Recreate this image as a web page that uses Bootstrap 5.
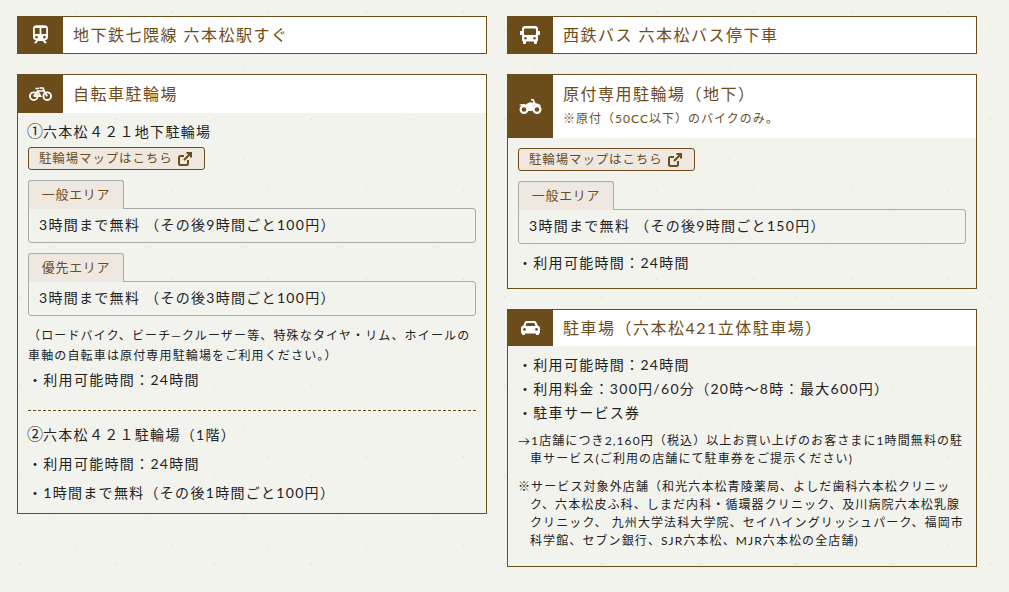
<!DOCTYPE html>
<html lang="ja">
<head>
<meta charset="utf-8">
<title>アクセス</title>
<link href="https://cdn.jsdelivr.net/npm/bootstrap@5.3.0/dist/css/bootstrap.min.css" rel="stylesheet">
<style>
body{background-color:#f3f3ee;background-image:radial-gradient(circle at 20px 30px,#e9e9e2 .7px,transparent 1px),radial-gradient(circle at 75px 12px,#e9e9e2 .7px,transparent 1px),radial-gradient(circle at 50px 70px,#ebebe4 .7px,transparent 1px);background-size:97px 89px;font-family:Lato,"Noto Sans CJK JP",sans-serif;color:#222;font-size:14px;letter-spacing:1.3px;line-height:24px;}
.wrap{width:960px;margin-left:17px;padding:16px 0 25px;gap:20px;}
.colm{width:470px;gap:20px;}
.pn{border:1px solid #6d4c1c;}
.hd{background:#fff;color:#6d4c1c;font-size:16px;letter-spacing:1.5px;line-height:24px;}
.hd-plain{min-height:38px;}
.hd-bike{min-height:38px;}
.hd-moped{min-height:63px;}
.hd-car{min-height:36px;}
.ico{width:46px;background:#6d4c1c;margin:-1px 0 0 -1px;flex:none;}
.hd-txt{padding:0 10px;}
.hd-stack{padding-top:7px;}
.sub{font-size:12px;letter-spacing:1.02px;line-height:18px;margin-top:4px;}
.bd{padding:7px 10px 8px;}
.bd-wide{padding-bottom:13px;}
.bd-foot{padding-bottom:16px;}
.mb-btn{display:flex;width:177px;align-items:center;height:23px;margin-top:3px;padding:0 10px;white-space:nowrap;border:1px solid #6d4c1c;border-radius:3px;background:#eee8e0;color:#6d4c1c;font-size:12.5px;line-height:21px;text-decoration:none;letter-spacing:.85px;}
.mb-btn svg{margin-left:5px;flex:none;}
.tab-set{margin-top:10px;}
.tb{display:block;height:29px;width:96px;margin-bottom:-1px;border:1px solid #aaa;border-bottom:0;border-radius:3px 3px 0 0;background:#eee8e0;color:#6d4c1c;text-align:center;font-size:13px;letter-spacing:.7px;line-height:27px;position:relative;z-index:1;}
.bx{border:1px solid #aaa;border-radius:0 3px 3px 3px;padding:4px 10px 5px;height:35px;line-height:24px;margin-bottom:10px;}
.bx-last{margin-bottom:7px;}
.nt{font-size:12px;letter-spacing:1.15px;line-height:20px;}
.gap-2px{margin-top:2px;}
.gap-5px{margin-top:5px;}
.ds{border-top:1px dashed #6d4c1c;margin:18px 0 12px;}
.ind{padding-left:12px;text-indent:-12px;font-size:12px;line-height:18px;margin:0;letter-spacing:1.1px;}
.ind-a{margin-top:7px;}
.ind-b{margin-top:10px;}
.circ{font-family:"Noto Sans CJK JP",sans-serif;font-feature-settings:"fwid";font-size:16px;letter-spacing:0;line-height:0;margin-left:-1px;}
</style>
</head>
<body>
<main class="wrap d-flex align-items-start">
  <section class="colm d-flex flex-column">
    <div class="pn hd hd-plain d-flex align-items-stretch">
      <div class="ico d-flex align-items-center justify-content-center">
        <svg width="15" height="19" viewBox="0 0 17 21" fill="#fff"><path fill-rule="evenodd" d="M4 0h9a4 4 0 0 1 4 4v9a4 4 0 0 1-3.600 4l2.400 3.400H13l-1.700-2.400H5.700L4 20.400H1.200l2.400-3.400A4 4 0 0 1 0 13V4a4 4 0 0 1 4-4zM2 4.500V10h5.500V3H3a1 1 0 0 0-1 1.500zM9.500 3V10H15V4.500A1 1 0 0 0 14 3zM4 12a1.500 1.500 0 1 0 0 3 1.500 1.500 0 0 0 0-3zm9 0a1.500 1.500 0 1 0 0 3 1.500 1.500 0 0 0 0-3z"/></svg>
      </div>
      <div class="hd-txt d-flex align-items-center">地下鉄七隈線 六本松駅すぐ</div>
    </div>
    <div class="pn">
      <div class="hd hd-bike d-flex">
        <div class="ico d-flex align-items-center justify-content-center">
          <svg width="23" height="14" viewBox="0 0 23 14" fill="none" stroke="#fff"><circle cx="4.800" cy="9.200" r="3.800" stroke-width="1.900"/><circle cx="18.200" cy="9.200" r="3.800" stroke-width="1.900"/><path d="M4.800 9.200L8.500 4h6.500l3.200 5.200M8.500 4l3 5.200H4.800M15.500 4.500L14 1h-3.500M6.500 1.500h3.500" stroke-width="1.700"/></svg>
        </div>
        <div class="hd-txt d-flex align-items-center">自転車駐輪場</div>
      </div>
      <div class="bd">
        <div><span class="circ">①</span>六本松４２１地下駐輪場</div>
        <a class="mb-btn" href="#">駐輪場マップはこちら<svg width="14" height="14" viewBox="0 0 14 14" fill="none" stroke="#6d4c1c" stroke-width="2"><path d="M10 8v3.500a1.500 1.500 0 0 1-1.500 1.500h-6A1.500 1.500 0 0 1 1 11.500v-6A1.500 1.500 0 0 1 2.500 4H6M6 8l7-7M8.500 1H13v4.500"/></svg></a>
        <div class="tab-set">
          <span class="tb">一般エリア</span>
          <div class="bx">3時間まで無料 （その後9時間ごと100円）</div>
          <span class="tb">優先エリア</span>
          <div class="bx">3時間まで無料 （その後3時間ごと100円）</div>
        </div>
        <div class="nt">（ロードバイク、ビーチ—クルーザー等、特殊なタイヤ・リム、ホイールの車軸の自転車は原付専用駐輪場をご利用ください。）</div>
        <div class="gap-2px">・利用可能時間：24時間</div>
        <div class="ds"></div>
        <div><span class="circ">②</span>六本松４２１駐輪場（1階）</div>
        <div class="gap-5px">・利用可能時間：24時間</div>
        <div class="gap-5px">・1時間まで無料（その後1時間ごと100円）</div>
      </div>
    </div>
  </section>
  <section class="colm d-flex flex-column">
    <div class="pn hd hd-plain d-flex align-items-stretch">
      <div class="ico d-flex align-items-center justify-content-center">
        <svg width="20" height="18" viewBox="0 0 20 18" fill="#fff"><path fill-rule="evenodd" d="M5 0h10a3 3 0 0 1 3 3v2h1.500a.5.5 0 0 1 .5.5v3a.5.5 0 0 1-.5.5H18v5a1.500 1.500 0 0 1-1 1.400V17a1 1 0 0 1-1 1h-1a1 1 0 0 1-1-1v-1.500H6V17a1 1 0 0 1-1 1H4a1 1 0 0 1-1-1v-1.600A1.500 1.500 0 0 1 2 14V9H.5A.5.5 0 0 1 0 8.500v-3A.5.5 0 0 1 .5 5H2V3a3 3 0 0 1 3-3zM4 3.500V8a1 1 0 0 0 1 1h10a1 1 0 0 0 1-1V3.500a1 1 0 0 0-1-1H5a1 1 0 0 0-1 1zM5.500 11a1.300 1.300 0 1 0 0 2.600 1.300 1.300 0 0 0 0-2.600zm9 0a1.300 1.300 0 1 0 0 2.600 1.300 1.300 0 0 0 0-2.600z"/></svg>
      </div>
      <div class="hd-txt d-flex align-items-center">西鉄バス 六本松バス停下車</div>
    </div>
    <div class="pn">
      <div class="hd hd-moped d-flex">
        <div class="ico d-flex align-items-center justify-content-center">
          <svg width="23" height="15" viewBox="0 0 23 15"><circle cx="5" cy="10.500" r="3.400" fill="none" stroke="#fff" stroke-width="2.200"/><circle cx="18" cy="10.500" r="3.400" fill="none" stroke="#fff" stroke-width="2.200"/><path fill="#fff" d="M0 6.200C2 4.800 5 4.700 7 5.600L9 4C10.500 3 13 3 14.600 3.800L13.600 1.500H12V0h2.600l2 4.300c2.200.2 4 1 5.400 2.400l-1 .7c-1.200-.6-2.600-1-4-.9L15 6.500 13.500 12H9L7.800 8.500C6 7.300 3 6.800 0 6.200z"/></svg>
        </div>
        <div class="hd-txt hd-stack">
          <div>原付専用駐輪場（地下）</div>
          <div class="sub">※原付（50CC以下）のバイクのみ。</div>
        </div>
      </div>
      <div class="bd bd-wide">
        <a class="mb-btn" href="#">駐輪場マップはこちら<svg width="14" height="14" viewBox="0 0 14 14" fill="none" stroke="#6d4c1c" stroke-width="2"><path d="M10 8v3.500a1.500 1.500 0 0 1-1.500 1.500h-6A1.500 1.500 0 0 1 1 11.500v-6A1.500 1.500 0 0 1 2.500 4H6M6 8l7-7M8.500 1H13v4.500"/></svg></a>
        <div class="tab-set">
          <span class="tb">一般エリア</span>
          <div class="bx bx-last">3時間まで無料 （その後9時間ごと150円）</div>
        </div>
        <div>・利用可能時間：24時間</div>
      </div>
    </div>
    <div class="pn">
      <div class="hd hd-car d-flex">
        <div class="ico d-flex align-items-center justify-content-center">
          <svg width="19" height="14" viewBox="0 0 19 14" fill="#fff"><path fill-rule="evenodd" d="M5.500 0h8a2 2 0 0 1 1.800 1.200L16.700 4.500c1.400.4 2.300 1.400 2.300 2.500v4.500a1 1 0 0 1-1 1V13a1 1 0 0 1-1 1h-1.200a1 1 0 0 1-1-1v-.5H4.200v.5a1 1 0 0 1-1 1H2a1 1 0 0 1-1-1v-.5a1 1 0 0 1-1-1V7c0-1.100.9-2.100 2.300-2.500L3.700 1.200A2 2 0 0 1 5.500 0zM5.700 2L4.500 5h10L13.300 2zM3.500 7a1.400 1.400 0 1 0 0 2.800 1.400 1.400 0 0 0 0-2.800zm12 0a1.400 1.400 0 1 0 0 2.800 1.400 1.400 0 0 0 0-2.800z"/></svg>
        </div>
        <div class="hd-txt d-flex align-items-center">駐車場（六本松421立体駐車場）</div>
      </div>
      <div class="bd bd-foot">
        <div>・利用可能時間：24時間</div>
        <div>・利用料金：300円/60分（20時～8時：最大600円）</div>
        <div>・駐車サービス券</div>
        <p class="ind ind-a">→1店舗につき2,160円（税込）以上お買い上げのお客さまに1時間無料の駐車サービス(ご利用の店舗にて駐車券をご提示ください)</p>
        <p class="ind ind-b">※サービス対象外店舗（和光六本松青陵薬局、よしだ歯科六本松クリニック、六本松皮ふ科、しまだ内科・循環器クリニック、及川病院六本松乳腺クリニック、 九州大学法科大学院、セイハイングリッシュパーク、福岡市科学館、セブン銀行、SJR六本松、MJR六本松の全店舗)</p>
      </div>
    </div>
  </section>
</main>
</body>
</html>
